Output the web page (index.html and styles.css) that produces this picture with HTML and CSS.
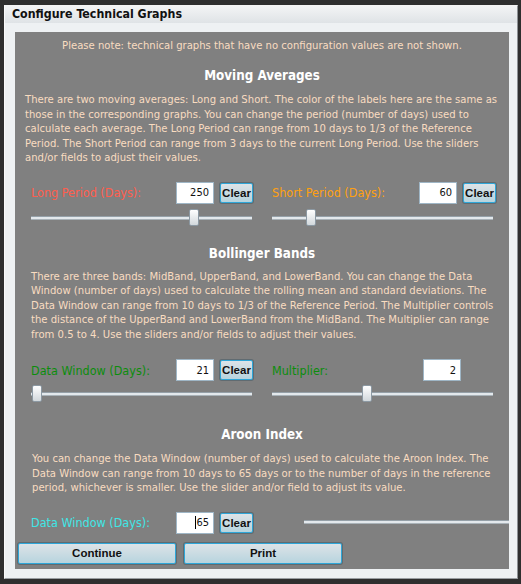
FILE: index.html
```html
<!DOCTYPE html>
<html>
<head>
<meta charset="utf-8">
<link rel="stylesheet" href="styles.css">
</head>
<body>
<div class="dialog">
  <div class="titlebar">Configure Technical Graphs</div>
  <div class="body">
    <div class="panel">
      <p class="note">Please note: technical graphs that have no configuration values are not shown.</p>

      <section class="group">
        <h2 class="heading">Moving Averages</h2>
        <p class="desc desc-ma">There are two moving averages: Long and Short. The color of the labels here are the same as<br>those in the corresponding graphs. You can change the period (number of days) used to<br>calculate each average. The Long Period can range from 10 days to 1/3 of the Reference<br>Period. The Short Period can range from 3 days to the current Long Period. Use the sliders<br>and/or fields to adjust their values.</p>
        <div class="controls">
          <div class="field">
            <div class="row">
              <span class="lbl lbl-long">Long Period (Days):</span>
              <input class="num" type="text" value="250">
              <button class="clear">Clear</button>
            </div>
            <div class="slider"><div class="track"></div><div class="thumb" style="left:158px"></div></div>
          </div>
          <div class="field">
            <div class="row">
              <span class="lbl lbl-short">Short Period (Days):</span>
              <input class="num" type="text" value="60">
              <button class="clear">Clear</button>
            </div>
            <div class="slider"><div class="track"></div><div class="thumb" style="left:34px"></div></div>
          </div>
        </div>
      </section>

      <section class="group group-bb">
        <h2 class="heading">Bollinger Bands</h2>
        <p class="desc desc-bb">There are three bands: MidBand, UpperBand, and LowerBand. You can change the Data<br>Window (number of days) used to calculate the rolling mean and standard deviations. The<br>Data Window can range from 10 days to 1/3 of the Reference Period. The Multiplier controls<br>the distance of the UpperBand and LowerBand from the MidBand. The Multiplier can range<br>from 0.5 to 4. Use the sliders and/or fields to adjust their values.</p>
        <div class="controls">
          <div class="field">
            <div class="row">
              <span class="lbl lbl-green">Data Window (Days):</span>
              <input class="num" type="text" value="21">
              <button class="clear">Clear</button>
            </div>
            <div class="slider slider-tight"><div class="track"></div><div class="thumb" style="left:1px"></div></div>
          </div>
          <div class="field">
            <div class="row">
              <span class="lbl lbl-green">Multiplier:</span>
              <input class="num num-solo" type="text" value="2">
            </div>
            <div class="slider slider-tight"><div class="track"></div><div class="thumb" style="left:90px"></div></div>
          </div>
        </div>
      </section>

      <section class="group group-ar">
        <h2 class="heading">Aroon Index</h2>
        <p class="desc desc-ar">You can change the Data Window (number of days) used to calculate the Aroon Index. The<br>Data Window can range from 10 days to 65 days or to the number of days in the reference<br>period, whichever is smaller. Use the slider and/or field to adjust its value.</p>
        <div class="row row-ar">
          <span class="lbl lbl-cyan">Data Window (Days):</span>
          <span class="num num-focus"><span class="caret"></span>65</span>
          <button class="clear">Clear</button>
          <div class="slider slider-inline"><div class="track"></div></div>
        </div>
      </section>

      <div class="actions">
        <button class="btn">Continue</button>
        <button class="btn">Print</button>
      </div>
    </div>
  </div>
</div>
</body>
</html>
```

FILE: styles.css
```css
html, body {
  margin: 0;
  padding: 0;
}
body {
  background: #2f2f2f;
  font-family: "DejaVu Sans Condensed", "DejaVu Sans", sans-serif;
  font-stretch: condensed;
  width: 521px;
  height: 584px;
  overflow: hidden;
}
.dialog {
  margin: 5px 0 0 4px;
  width: 514px;
  height: 574px;
  box-sizing: border-box;
  border-left: 1px solid #fafafa;
  border-top: 1px solid #f4f4f4;
  border-right: 1px solid #8e9296;
  border-bottom: 1px solid #9a9ea2;
  background: #eef1f3;
  display: flex;
  flex-direction: column;
}
.titlebar {
  height: 17px;
  line-height: 17px;
  padding-left: 7px;
  background: linear-gradient(#f3f4f5, #dfe3e6);
  font-weight: bold;
  font-size: 12.3px;
  color: #111;
}
.body {
  padding: 9px 8px 9px 10px;
  flex: 1;
}
.panel {
  background: #808080;
  height: 537px;
  overflow: hidden;
  display: flex;
  flex-direction: column;
}
.note {
  margin: 7px 0 0;
  text-align: center;
  font-size: 11.2px;
  line-height: 14px;
  color: #f9dcc0;
}
.heading {
  margin: 13px 0 0;
  text-align: center;
  font-size: 13.3px;
  line-height: 20px;
  font-weight: bold;
  color: #fff;
}
.group-bb .heading { margin-top: 18px; }
.group-ar .heading { margin-top: 23px; }
.desc {
  margin: 7px 0 0;
  font-size: 11.2px;
  line-height: 14.5px;
  color: #f9dcc0;
  white-space: nowrap;
}
.desc-ma { padding-left: 10px; }
.desc-bb { padding-left: 16px; margin-top: 6px; }
.desc-ar { padding-left: 17px; }
.controls {
  display: grid;
  grid-template-columns: 222px 224px;
  column-gap: 19px;
  padding-left: 16px;
  margin-top: 16px;
}
.group-bb .controls { margin-top: 17px; }
.row {
  display: flex;
  align-items: center;
  height: 22px;
}
.lbl {
  flex: 1;
  font-size: 12.5px;
  white-space: nowrap;
}
.lbl-long { color: #ff5e4e; }
.lbl-short { color: #ffa010; }
.lbl-green { color: #0c8d0c; }
.lbl-cyan { color: #3fe6e6; }
.num {
  flex: none;
  width: 38px;
  height: 22px;
  box-sizing: border-box;
  border: 1px solid #9fb6c6;
  background: #fff;
  text-align: right;
  padding: 0 4px 0 0;
  font-family: inherit;
  font-stretch: condensed;
  font-size: 11px;
  color: #111;
  outline: none;
}
.num-focus {
  display: flex;
  align-items: center;
  justify-content: flex-end;
  line-height: 1;
}
.caret {
  width: 1px;
  height: 13px;
  background: #000;
}
.num-solo { margin-right: 35px; }
.clear, .btn {
  flex: none;
  border: 1px solid #2ea6d8;
  box-shadow: 0 0 0 1px rgba(70, 90, 100, 0.55);
  background: linear-gradient(#dde3e7, #b7d4de);
  border-radius: 2px;
  font-family: "Liberation Sans", sans-serif;
  font-weight: bold;
  font-size: 11.5px;
  color: #111;
  padding: 0;
  cursor: pointer;
}
.clear {
  width: 33px;
  height: 20px;
  margin-left: 6px;
}
.slider {
  position: relative;
  width: 221px;
  height: 17px;
  margin-top: 5px;
}
.slider-tight { margin-top: 4px; }
.track {
  position: absolute;
  left: 0;
  right: 0;
  top: 8px;
  height: 2px;
  background: #e3e8ec;
  box-shadow: 0 -1px 0 #95a0a8, 0 1px 0 #a9b2b8;
}
.thumb {
  position: absolute;
  top: 0;
  width: 10px;
  height: 17px;
  box-sizing: border-box;
  border: 1px solid #8c99a3;
  border-radius: 2px;
  background: linear-gradient(#ffffff, #d2d8dc);
}
.row-ar {
  margin: 16px 0 0 16px;
}
.row-ar .lbl {
  flex: 0 0 145px;
}
.slider-inline {
  margin: 0 0 0 51px;
  width: 260px;
  flex: none;
  height: 17px;
}
.slider-inline .track { top: 7px; }
.actions {
  display: flex;
  gap: 8px;
  margin: 9px 0 0 3px;
}
.btn {
  width: 158px;
  height: 21px;
}
```
